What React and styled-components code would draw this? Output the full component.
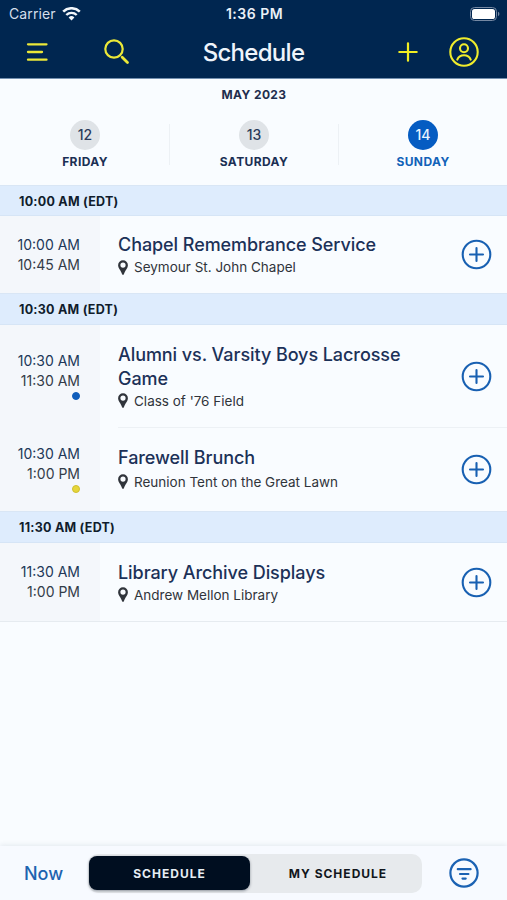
import styled, { createGlobalStyle } from "styled-components";

const GlobalStyle = createGlobalStyle`
  * {
    box-sizing: border-box;
  }

  body {
    margin: 0;
    background-color: #f9fcff;
    font-family: Inter, "Liberation Sans", sans-serif;
  }

  button {
    padding: 0;
    border: none;
    background: none;
    font-family: inherit;
    cursor: pointer;
  }

  svg {
    display: block;
  }
`;

const Screen = styled.div`
  display: flex;
  flex-direction: column;
  width: 507px;
  height: 900px;
  overflow: hidden;
  background-color: #f9fcff;
`;

const Header = styled.header`
  height: 79px;
  background-color: #002650;
  border-bottom: 1px solid #7390b0;
`;

const StatusBar = styled.div`
  display: grid;
  grid-template-columns: 1fr auto 1fr;
  align-items: center;
  height: 27px;
  padding: 0 7px 0 9px;
  color: #eaf0f7;
`;

const Carrier = styled.div`
  display: flex;
  align-items: center;
  gap: 6px;
  font-size: 14px;
  letter-spacing: 0.1px;
  color: #d5dfeb;
`;

const Clock = styled.div`
  font-size: 14px;
  font-weight: 600;
  letter-spacing: 0.5px;
`;

const BatteryWrap = styled.div`
  display: flex;
  justify-content: flex-end;
`;

const NavBar = styled.div`
  display: grid;
  grid-template-columns: 1fr auto 1fr;
  align-items: center;
  height: 50px;
  padding: 0 27px 0 26px;
`;

const NavGroup = styled.div`
  display: flex;
  align-items: center;
  justify-content: ${props => props.$end ? "flex-end" : "flex-start"};
  gap: ${props => props.$gap}px;
`;

const Title = styled.h1`
  margin: 0;
  padding-left: 1px;
  font-size: 24px;
  font-weight: 500;
  letter-spacing: -0.7px;
  color: #eef4fb;
`;

const DatePicker = styled.section`
  height: 106px;
  padding-top: 8px;
`;

const Month = styled.div`
  padding-left: 1px;
  text-align: center;
  font-size: 12px;
  line-height: 16px;
  font-weight: 700;
  letter-spacing: 0.4px;
  color: #1f2e4e;
`;

const Days = styled.div`
  display: grid;
  grid-template-columns: repeat(3, 1fr);
  margin-top: 17px;
`;

const Day = styled.button`
  display: flex;
  flex-direction: column;
  align-items: center;
  height: 50px;
  padding-left: 1px;
  color: ${props => props.$active ? "#1262b8" : "#1b2f54"};

  & + & {
    background: linear-gradient(#edf1f5, #edf1f5) 0 4px / 1px 41px no-repeat;
  }
`;

const DayNumber = styled.span`
  display: flex;
  align-items: center;
  justify-content: center;
  width: 30px;
  height: 30px;
  padding-bottom: 2px;
  border-radius: 50%;
  font-size: 14px;
  font-weight: 500;
  color: ${props => props.$active ? "#e8f3ff" : "#2b3b5a"};
  background-color: ${props => props.$active ? "#055cc2" : "#dfe3e7"};
`;

const DayName = styled.span`
  margin-top: 4px;
  font-size: 12px;
  line-height: 16px;
  font-weight: 700;
  letter-spacing: 0.4px;
`;

const SlotHeader = styled.h2`
  display: flex;
  align-items: center;
  height: ${props => props.$height}px;
  margin: 0;
  padding: 1px 0 0 19px;
  font-size: 12.5px;
  font-weight: 700;
  letter-spacing: 0.25px;
  color: #101c2c;
  background-color: #deecfd;
  border-top: 1px solid #d9e6f5;
  border-bottom: 1px solid #d6e5f6;
`;

const EventRow = styled.article`
  display: grid;
  grid-template-columns: 100px 1fr;
  height: ${props => props.$height}px;
`;

const Times = styled.div`
  display: flex;
  flex-direction: column;
  align-items: flex-end;
  justify-content: center;
  padding-right: 20px;
  padding-bottom: ${props => props.$lift}px;
  font-size: 14px;
  line-height: 20px;
  color: #333b48;
  background-color: #f4f7fb;
`;

const StartTime = styled.span`
  color: #213758;
`;

const Dot = styled.span`
  width: 8px;
  height: 8px;
  margin-top: 1px;
  border-radius: 50%;
  background-color: ${props => props.$color};
  border: 1px solid ${props => props.$edge};
`;

const EventBody = styled.div`
  display: flex;
  align-items: center;
  justify-content: space-between;
  margin-left: 18px;
  padding-right: 15px;
  border-bottom: ${props => props.$divided ? "1px solid #edf1f5" : "none"};
`;

const EventText = styled.div`
  display: flex;
  flex-direction: column;
  gap: ${props => props.$gap || 0}px;
  padding-top: ${props => props.$gap ? 0 : 1}px;
  padding-bottom: ${props => props.$gap ? 2 : 0}px;
`;

const EventTitle = styled.h3`
  margin: 0;
  max-width: 300px;
  font-size: 18px;
  line-height: 24px;
  font-weight: 500;
  letter-spacing: -0.07px;
  color: #1c3158;
`;

const Place = styled.div`
  display: flex;
  align-items: center;
  gap: 6px;
  font-size: 13.5px;
  line-height: 20px;
  color: #30343b;
`;

const Footer = styled.footer`
  display: flex;
  align-items: center;
  height: 54px;
  margin-top: auto;
  padding: 0 28px 0 24px;
  background-color: #f7faff;
  box-shadow: 0 -1px 5px rgba(40, 70, 100, 0.1);
`;

const NowButton = styled.button`
  width: 64px;
  text-align: left;
  font-size: 18px;
  font-weight: 500;
  color: #1e64b0;
`;

const Segments = styled.div`
  display: grid;
  grid-template-columns: 162px 1fr;
  width: 334px;
  height: 39px;
  border-radius: 10px;
  background-color: #e7eaed;
`;

const Segment = styled.button`
  margin: ${props => props.$active ? "2px 0 3px 1px" : "0"};
  padding: ${props => props.$active ? "2px 0 0 0" : "0 0 0 4px"};
  border-radius: 8px;
  font-size: 12px;
  font-weight: 700;
  letter-spacing: 1px;
  color: ${props => props.$active ? "#e6edf4" : "#12161c"};
  background-color: ${props => props.$active ? "#000e20" : "transparent"};
  box-shadow: ${props => props.$active ? "0 1px 3px rgba(0, 14, 32, 0.4)" : "none"};
`;

const FilterButton = styled.button`
  margin-left: auto;
`;

const WifiIcon = () => (
  <svg width="19" height="14" viewBox="0 0 19 14" fill="none" stroke="#f2f6fa">
    <path d="M1.2 4.6a12 12 0 0 1 16.6 0" strokeWidth="2.6" />
    <path d="M4.3 8a7.5 7.5 0 0 1 10.4 0" strokeWidth="2.4" />
    <path d="M9.5 13.4 6.6 10.5a4.2 4.2 0 0 1 5.8 0z" fill="#f2f6fa" stroke="none" />
  </svg>
);

const BatteryIcon = () => (
  <svg width="30" height="14" viewBox="0 0 30 14">
    <rect x="0.5" y="0.5" width="26" height="13" rx="4" fill="none" stroke="#7588a3" />
    <rect x="2" y="2" width="23" height="10" rx="2.6" fill="#fff" />
    <path d="M28 4.8a2.4 2.4 0 0 1 0 4.4z" fill="#7588a3" />
  </svg>
);

const MenuIcon = () => (
  <svg width="22" height="20" viewBox="0 0 22 20" stroke="#ebe838" strokeWidth="2.3" strokeLinecap="round">
    <path d="M2 2.3h18.5M2 10h14M2 17.7h18.5" />
  </svg>
);

const SearchIcon = () => (
  <svg width="26" height="26" viewBox="0 0 26 26" fill="none" stroke="#ebe838" strokeWidth="2.2" strokeLinecap="round">
    <circle cx="10" cy="10" r="8.7" />
    <path d="m18.2 18.2 5.3 5.3" strokeWidth="2.8" />
  </svg>
);

const AddIcon = () => (
  <svg width="20" height="20" viewBox="0 0 20 20" stroke="#f0ed22" strokeWidth="2.2" strokeLinecap="round">
    <path d="M10 1.3v17.4M1.3 10h17.4" />
  </svg>
);

const ProfileIcon = () => (
  <svg width="31" height="30" viewBox="0 0 31 30" fill="none" stroke="#efec2c" strokeWidth="2.1" strokeLinecap="round">
    <circle cx="15" cy="15" r="13.7" />
    <circle cx="15" cy="11.3" r="4" />
    <path d="M8.3 22.6c1.2-3 3.7-4.4 6.7-4.4s5.5 1.4 6.7 4.4" />
  </svg>
);

const PinIcon = () => (
  <svg width="10" height="15" viewBox="0 0 10 15">
    <path
      fillRule="evenodd"
      fill="#30343b"
      d="M5 .3A4.9 4.9 0 0 0 .1 5.2c0 3 2.9 5.2 4 9.1.2.7 1.6.7 1.8 0 1.1-3.9 4-6.1 4-9.1A4.9 4.9 0 0 0 5 .3zM5 2.5a2.6 2.6 0 1 1 0 5.2 2.6 2.6 0 0 1 0-5.2z"
    />
  </svg>
);

const CircleAddIcon = () => (
  <svg width="31" height="31" viewBox="0 0 31 31" fill="none" stroke="#1860b2" strokeWidth="2.1" strokeLinecap="round">
    <circle cx="15.5" cy="15.5" r="13.8" />
    <path d="M15.5 9v13M9 15.5h13" />
  </svg>
);

const FilterIcon = () => (
  <svg width="30" height="30" viewBox="0 0 30 30" fill="none" stroke="#1b62b3" strokeWidth="2.2" strokeLinecap="round">
    <circle cx="15" cy="15" r="13.6" />
    <path d="M8.8 11.2h12.8M11 16h8.4M13.5 20.6h3.2" />
  </svg>
);

const days = [
  { number: 12, name: "FRIDAY" },
  { number: 13, name: "SATURDAY" },
  { number: 14, name: "SUNDAY", active: true },
];

const BLUE = { color: "#0f5dbb", edge: "#0f5dbb" };
const YELLOW = { color: "#e6d63a", edge: "#cfbf2e" };

const slots = [
  {
    label: "10:00 AM (EDT)",
    height: 31,
    events: [
      { start: "10:00 AM", end: "10:45 AM", title: "Chapel Remembrance Service", place: "Seymour St. John Chapel", height: 77 },
    ],
  },
  {
    label: "10:30 AM (EDT)",
    height: 32,
    events: [
      { start: "10:30 AM", end: "11:30 AM", title: "Alumni vs. Varsity Boys Lacrosse Game", place: "Class of '76 Field", height: 103, dot: BLUE },
      { start: "10:30 AM", end: "1:00 PM", title: "Farewell Brunch", place: "Reunion Tent on the Great Lawn", height: 83, dot: YELLOW, gap: 2 },
    ],
  },
  {
    label: "11:30 AM (EDT)",
    height: 32,
    events: [
      { start: "11:30 AM", end: "1:00 PM", title: "Library Archive Displays", place: "Andrew Mellon Library", height: 78 },
    ],
  },
];

const SlotList = styled.main`
  border-bottom: 1px solid #e6ebf0;
`;

const Event = ({ event, divided }) => (
  <EventRow $height={event.height}>
    <Times $lift={event.dot ? 2 : 0}>
      <StartTime>{event.start}</StartTime>
      <span>{event.end}</span>
      {event.dot && <Dot $color={event.dot.color} $edge={event.dot.edge} />}
    </Times>
    <EventBody $divided={divided}>
      <EventText $gap={event.gap}>
        <EventTitle>{event.title}</EventTitle>
        <Place>
          <PinIcon />
          {event.place}
        </Place>
      </EventText>
      <button aria-label="Add to my schedule">
        <CircleAddIcon />
      </button>
    </EventBody>
  </EventRow>
);

const App = () => {
  return (
    <Screen>
      <GlobalStyle />
      <Header>
        <StatusBar>
          <Carrier>
            Carrier
            <WifiIcon />
          </Carrier>
          <Clock>1:36 PM</Clock>
          <BatteryWrap>
            <BatteryIcon />
          </BatteryWrap>
        </StatusBar>
        <NavBar>
          <NavGroup $gap={56}>
            <MenuIcon />
            <SearchIcon />
          </NavGroup>
          <Title>Schedule</Title>
          <NavGroup $end $gap={31}>
            <AddIcon />
            <ProfileIcon />
          </NavGroup>
        </NavBar>
      </Header>
      <DatePicker>
        <Month>MAY 2023</Month>
        <Days>
          {days.map(day => (
            <Day key={day.number} $active={day.active}>
              <DayNumber $active={day.active}>{day.number}</DayNumber>
              <DayName>{day.name}</DayName>
            </Day>
          ))}
        </Days>
      </DatePicker>
      <SlotList>
        {slots.map(slot => (
          <section key={slot.label}>
            <SlotHeader $height={slot.height}>{slot.label}</SlotHeader>
            {slot.events.map((event, i) => (
              <Event key={event.title} event={event} divided={i < slot.events.length - 1} />
            ))}
          </section>
        ))}
      </SlotList>
      <Footer>
        <NowButton>Now</NowButton>
        <Segments>
          <Segment $active>SCHEDULE</Segment>
          <Segment>MY SCHEDULE</Segment>
        </Segments>
        <FilterButton aria-label="Filter">
          <FilterIcon />
        </FilterButton>
      </Footer>
    </Screen>
  );
};

export default App;
